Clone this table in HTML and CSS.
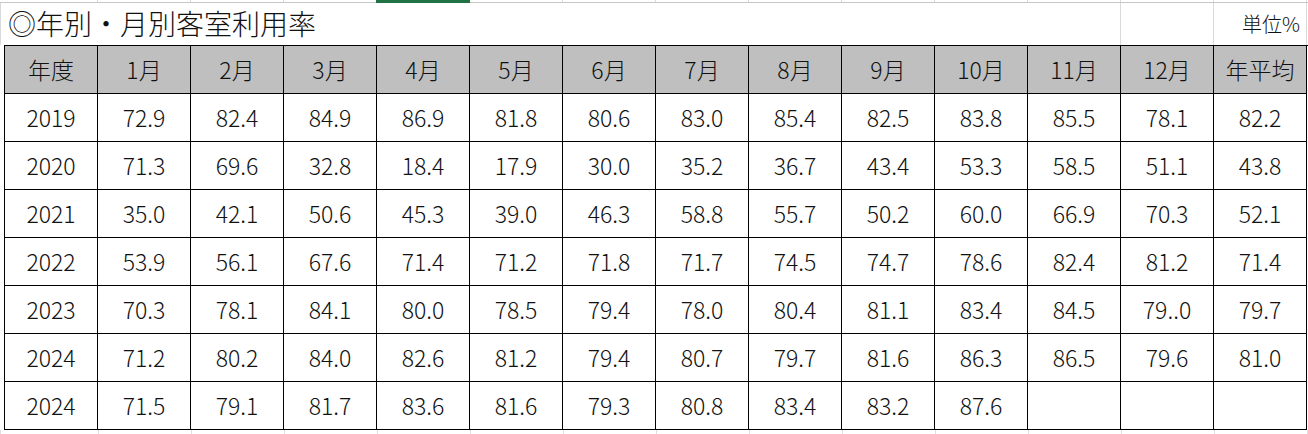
FILE: index.html
```html
<!DOCTYPE html>
<html lang="ja">
<head>
<meta charset="utf-8">
<title>年別・月別客室利用率</title>
<link rel="stylesheet" href="styles.css">
</head>
<body>
<div class="sheet">
  <div class="colbar"><span class="sel"></span></div>
  <div class="titlerow">
    <div class="title">◎年別・月別客室利用率</div>
    <div class="blank"></div>
    <div class="unit">単位%</div>
  </div>
  <div class="table">
    <div class="c h">年度</div><div class="c h">1月</div><div class="c h">2月</div><div class="c h">3月</div><div class="c h">4月</div><div class="c h">5月</div><div class="c h">6月</div><div class="c h">7月</div><div class="c h">8月</div><div class="c h">9月</div><div class="c h">10月</div><div class="c h">11月</div><div class="c h">12月</div><div class="c h">年平均</div>

    <div class="c">2019</div><div class="c">72.9</div><div class="c">82.4</div><div class="c">84.9</div><div class="c">86.9</div><div class="c">81.8</div><div class="c">80.6</div><div class="c">83.0</div><div class="c">85.4</div><div class="c">82.5</div><div class="c">83.8</div><div class="c">85.5</div><div class="c">78.1</div><div class="c">82.2</div>

    <div class="c">2020</div><div class="c">71.3</div><div class="c">69.6</div><div class="c">32.8</div><div class="c">18.4</div><div class="c">17.9</div><div class="c">30.0</div><div class="c">35.2</div><div class="c">36.7</div><div class="c">43.4</div><div class="c">53.3</div><div class="c">58.5</div><div class="c">51.1</div><div class="c">43.8</div>

    <div class="c">2021</div><div class="c">35.0</div><div class="c">42.1</div><div class="c">50.6</div><div class="c">45.3</div><div class="c">39.0</div><div class="c">46.3</div><div class="c">58.8</div><div class="c">55.7</div><div class="c">50.2</div><div class="c">60.0</div><div class="c">66.9</div><div class="c">70.3</div><div class="c">52.1</div>

    <div class="c">2022</div><div class="c">53.9</div><div class="c">56.1</div><div class="c">67.6</div><div class="c">71.4</div><div class="c">71.2</div><div class="c">71.8</div><div class="c">71.7</div><div class="c">74.5</div><div class="c">74.7</div><div class="c">78.6</div><div class="c">82.4</div><div class="c">81.2</div><div class="c">71.4</div>

    <div class="c">2023</div><div class="c">70.3</div><div class="c">78.1</div><div class="c">84.1</div><div class="c">80.0</div><div class="c">78.5</div><div class="c">79.4</div><div class="c">78.0</div><div class="c">80.4</div><div class="c">81.1</div><div class="c">83.4</div><div class="c">84.5</div><div class="c">79..0</div><div class="c">79.7</div>

    <div class="c">2024</div><div class="c">71.2</div><div class="c">80.2</div><div class="c">84.0</div><div class="c">82.6</div><div class="c">81.2</div><div class="c">79.4</div><div class="c">80.7</div><div class="c">79.7</div><div class="c">81.6</div><div class="c">86.3</div><div class="c">86.5</div><div class="c">79.6</div><div class="c">81.0</div>

    <div class="c">2024</div><div class="c">71.5</div><div class="c">79.1</div><div class="c">81.7</div><div class="c">83.6</div><div class="c">81.6</div><div class="c">79.3</div><div class="c">80.8</div><div class="c">83.4</div><div class="c">83.2</div><div class="c">87.6</div><div class="c"></div><div class="c"></div><div class="c"></div>
  </div>
  <div class="below"></div>
</div>
</body>
</html>
```

FILE: styles.css
```css
html, body {
  margin: 0;
  padding: 0;
  background: #ffffff;
}

body {
  font-family: "Noto Sans CJK JP", "Noto Sans", sans-serif;
  font-weight: 300;
  color: #111111;
  width: 1308px;
  height: 434px;
  overflow: hidden;
}

.sheet {
  position: relative;
  width: 1308px;
}

.colbar {
  position: relative;
  height: 2px;
  border-bottom: 1px solid #c6c6c6;
  background-image: repeating-linear-gradient(to right, transparent 0, transparent 92px, #dadada 92px, #dadada 93px);
  background-position: 5px 0;
}

.colbar .sel {
  position: absolute;
  left: 376px;
  top: 0;
  width: 94px;
  height: 3px;
  background: #217346;
}

.titlerow {
  display: grid;
  grid-template-columns: 1121px 93px 93px;
  height: 42px;
}

.title {
  border-left: 1px solid #dadada;
  border-right: 1px solid #dadada;
  font-size: 28px;
  line-height: 40px;
  padding-left: 7px;
  white-space: nowrap;
}

.blank {
  border-right: 1px solid #dadada;
}

.unit {
  border-right: 1px solid #dadada;
  font-size: 20px;
  line-height: 42px;
  text-align: right;
  padding-right: 6px;
}

.table {
  margin-left: 4px;
  display: grid;
  grid-template-columns: repeat(14, 93px);
  grid-auto-rows: 48px;
  width: 1303px;
  border-left: 1px solid #000;
  border-top: 1px solid #000;
}

.c {
  box-sizing: border-box;
  border-right: 1px solid #000;
  border-bottom: 1px solid #000;
  display: flex;
  align-items: center;
  justify-content: center;
  font-size: 23px;
  line-height: 1;
}

.h {
  background: #bfbfbf;
}

.below {
  height: 5px;
  background-image: repeating-linear-gradient(to right, transparent 0, transparent 92px, #e0e0e0 92px, #e0e0e0 93px);
  background-position: 5px 0;
  border-left: 1px solid #e0e0e0;
}
```
